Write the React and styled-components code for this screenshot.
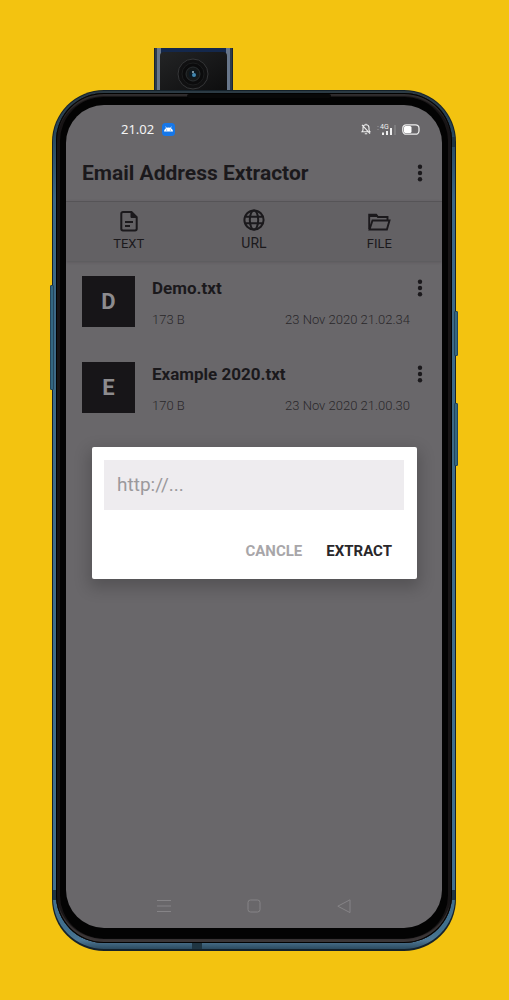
import React, { useState } from "react";
import styled, { createGlobalStyle } from "styled-components";

const GlobalStyle = createGlobalStyle`
  * {
    box-sizing: border-box;
  }
  body {
    margin: 0;
    background-color: #f3c310;
    font-family: Roboto, "Liberation Sans", sans-serif;
    color: #1b191c;
  }
  button,
  input {
    font-family: inherit;
  }
  svg {
    display: block;
  }
`;

const files = [
  { name: "Demo.txt", size: "173 B", date: "23 Nov 2020 21.02.34" },
  { name: "Example 2020.txt", size: "170 B", date: "23 Nov 2020 21.00.30" },
];

const CameraIcon = () => (
  <svg width="79" height="44" viewBox="0 0 79 44" aria-hidden="true">
    <defs>
      <linearGradient id="plate" x1="0" x2="1" y1="0" y2="1">
        <stop offset="0" stopColor="#232425" />
        <stop offset="1" stopColor="#0d0d0e" />
      </linearGradient>
    </defs>
    <path d="M0 1h79v43H0z" fill="#1b2530" />
    <path d="M1 1h6v43H1zM72 1h5v43h-5z" fill="#68768a" />
    <path d="M2 1v43M77 1v43" stroke="#2c3b4c" strokeWidth="2" />
    <path d="M7 1h65v5H7z" fill="#14284c" />
    <path d="M6 44V9q0-4 4-4h59q4 0 4 4v35z" fill="url(#plate)" />
    <circle cx="39" cy="27" r="15" fill="#101011" stroke="#353638" />
    <circle cx="39" cy="27" r="11" fill="#0b0b0c" stroke="#1c1d1e" />
    <circle cx="39" cy="27" r="7" fill="#151819" stroke="#2a2e30" />
    <circle cx="39" cy="27" r="4" fill="#0b1923" />
    <circle cx="40" cy="28" r="2" fill="#4187b0" />
    <circle cx="39" cy="25" r="1" fill="#a0b9c4" />
  </svg>
);

const MoreIcon = () => (
  <svg width="6" height="18" viewBox="0 0 6 18" fill="currentColor" aria-hidden="true">
    <circle cx="3" cy="2.7" r="2.2" />
    <circle cx="3" cy="9" r="2.2" />
    <circle cx="3" cy="15.3" r="2.2" />
  </svg>
);

const AndroidBadge = () => (
  <svg width="13" height="13" viewBox="0 0 13 13" aria-hidden="true">
    <rect width="13" height="13" rx="3.5" fill="#1677e8" />
    <path d="M2 8.500a4.500 4 0 0 1 9 0z" fill="#fff" />
    <path d="M3.600 3.600l1 1.600M9.400 3.600l-1 1.600" stroke="#fff" strokeWidth=".7" />
    <circle cx="4.700" cy="7" r=".5" fill="#1677e8" />
    <circle cx="8.300" cy="7" r=".5" fill="#1677e8" />
  </svg>
);

const MutedIcon = () => (
  <svg width="10" height="12" viewBox="0 0 10 12" fill="none" stroke="#eee" strokeWidth="1.100" aria-hidden="true">
    <path d="M1 8.800h8L8 7.200V4.800a3 3 0 0 0-6 0v2.400zM3.800 10.800h2.400M5 .8v1M1 1.800l8 8.800" />
  </svg>
);

const SignalIcon = () => (
  <svg width="19" height="13" viewBox="0 0 19 13" aria-hidden="true">
    <path d="M6 9.500v2.500M10 8v4M14 5v7" stroke="#eee" strokeWidth="2" />
    <path d="M18 2v10" stroke="#858386" strokeWidth="1.500" />
    <path d="M1 3v1M1 6v1" stroke="#9c9a9d" />
    <text x="3" y="6" fontSize="7" fill="#eee">
      4G
    </text>
  </svg>
);

const BatteryIcon = () => (
  <svg width="18" height="11" viewBox="0 0 18 11" aria-hidden="true">
    <rect x=".8" y=".8" width="16.200" height="9.400" rx="3.500" fill="none" stroke="#eee" strokeWidth="1.300" />
    <rect x="2" y="2" width="7.500" height="7" rx="1.500" fill="#fff" />
  </svg>
);

const DocIcon = () => (
  <svg width="18" height="22" viewBox="0 0 18 22" fill="none" stroke="currentColor" strokeWidth="2" aria-hidden="true">
    <path d="M11.500 2H3A1.700 1.700 0 0 0 1.300 3.700v15.100A1.700 1.700 0 0 0 3 20.500h12a1.700 1.700 0 0 0 1.700-1.700V7.200z" />
    <path d="M11 2v5.500h5.700z" fill="currentColor" strokeWidth="1" />
    <path d="M5 12h8M5 16h5" strokeWidth="1.800" />
  </svg>
);

const GlobeIcon = () => (
  <svg width="22" height="22" viewBox="0 0 22 22" fill="none" stroke="currentColor" strokeWidth="2" aria-hidden="true">
    <circle cx="11" cy="11" r="9.600" />
    <ellipse cx="11" cy="11" rx="4.200" ry="9.600" />
    <path d="M2.300 7.700h17.400M2.300 14.300h17.400" />
  </svg>
);

const FolderIcon = () => (
  <svg width="23" height="19" viewBox="0 0 23 19" fill="none" stroke="currentColor" strokeWidth="1.900" aria-hidden="true">
    <path d="M1.200 16V1.800h7l1.800 2.200h9.500v3.500" />
    <path d="M1 1h7.500l1.800 3H1z" fill="currentColor" stroke="none" />
    <path d="M1.500 16.500L4.500 7.500h17l-2.600 9z" />
  </svg>
);

const actions = [
  { label: "TEXT", icon: <DocIcon /> },
  { label: "URL", icon: <GlobeIcon />, large: true },
  { label: "FILE", icon: <FolderIcon /> },
];

export default function App() {
  const [url, setUrl] = useState("");

  return (
    <Page>
      <GlobalStyle />
      <Camera>
        <CameraIcon />
      </Camera>
      <Frame>
        <SideKey $side="left" $top={195} $height={105} />
        <SideKey $side="right" $top={221} $height={45} />
        <SideKey $side="right" $top={313} $height={63} />
        <Rim>
          <Bezel>
            <Screen>
              <StatusBar>
                <Clock>
                  21.02 <AndroidBadge />
                </Clock>
                <Indicators>
                  <MutedIcon />
                  <SignalIcon />
                  <BatteryIcon />
                </Indicators>
              </StatusBar>
              <Header>
                <Title>Email Address Extractor</Title>
                <IconButton aria-label="More options">
                  <MoreIcon />
                </IconButton>
              </Header>
              <Toolbar>
                {actions.map((action) => (
                  <Action key={action.label} $large={action.large}>
                    {action.icon}
                    <span>{action.label}</span>
                  </Action>
                ))}
              </Toolbar>
              <FileList>
                {files.map((file) => (
                  <FileRow key={file.name}>
                    <Avatar>{file.name[0]}</Avatar>
                    <FileInfo>
                      <FileName>{file.name}</FileName>
                      <FileMeta>
                        <span>{file.size}</span>
                        <span>{file.date}</span>
                      </FileMeta>
                    </FileInfo>
                    <IconButton aria-label={`Options for ${file.name}`}>
                      <MoreIcon />
                    </IconButton>
                  </FileRow>
                ))}
              </FileList>
              <NavBar>
                <NavButton aria-label="Recent apps">
                  <svg width="14" height="14" viewBox="0 0 14 14">
                    <path d="M0 1.500h14M0 7h14M0 12.500h14" />
                  </svg>
                </NavButton>
                <NavButton aria-label="Home">
                  <svg width="14" height="14" viewBox="0 0 14 14">
                    <rect x="1" y="1" width="12" height="12" rx="2.500" />
                  </svg>
                </NavButton>
                <NavButton aria-label="Back">
                  <svg width="14" height="14" viewBox="0 0 14 14">
                    <path d="M13 .8v12.800L.8 7.200z" />
                  </svg>
                </NavButton>
              </NavBar>
              <Overlay>
                <Dialog role="dialog" aria-label="Extract from URL">
                  <UrlInput
                    type="text"
                    aria-label="URL"
                    placeholder="http://..."
                    value={url}
                    onChange={(e) => setUrl(e.target.value)}
                  />
                  <DialogActions>
                    <DialogButton $muted onClick={() => setUrl("")}>
                      CANCLE
                    </DialogButton>
                    <DialogButton>EXTRACT</DialogButton>
                  </DialogActions>
                </Dialog>
              </Overlay>
            </Screen>
          </Bezel>
        </Rim>
        <Antenna $place="bottom" />
        <Antenna $place="left" />
        <Antenna $place="right" />
        <Antenna $place="rightTop" />
        <Earpiece />
      </Frame>
    </Page>
  );
}

const Page = styled.main`
  min-height: 100vh;
  padding: 47px 53px 49px 52px;
  display: flex;
  flex-direction: column;
`;

const Camera = styled.div`
  height: 43px;
  padding-left: 102px;
`;

const Frame = styled.div`
  position: relative;
  flex: 1;
  display: flex;
  padding: 1px 1px 2px;
  border-radius: 52px;
  background-color: #15222b;
`;

const Rim = styled.div`
  flex: 1;
  display: flex;
  padding: 2px 3px 6px;
  border-radius: 51px;
  background: linear-gradient(#2c3a43 0, #27465a 40px, #3b6785 110px, #41708e 98%, #4e7793 99%, #2c4b60 100%);
`;

const Bezel = styled.div`
  flex: 1;
  display: flex;
  padding: 12px 10px 15px;
  border-radius: 48px;
  background-color: #030303;
  box-shadow:
    inset 0 0 0 1px #020202,
    inset 0 -4px 1px #3b3637,
    inset 0 3px 1px #302d2e,
    inset 0 0 0 4px #171415;
`;

const Screen = styled.div`
  position: relative;
  flex: 1;
  display: flex;
  flex-direction: column;
  overflow: hidden;
  border-radius: 38px;
  background-color: #69676a;
`;

const SideKey = styled.span`
  position: absolute;
  z-index: 1;
  top: ${({ $top }) => $top}px;
  ${({ $side }) => $side}: -2px;
  width: 4px;
  height: ${({ $height }) => $height}px;
  border: 1px solid #24455a;
  border-radius: 1px;
  background-color: #336681;
`;

const antennaPlaces = {
  bottom: "bottom: 2px; left: 140px; width: 10px; height: 6px;",
  left: "bottom: 51px; left: 1px; width: 3px; height: 10px;",
  right: "bottom: 51px; right: 1px; width: 3px; height: 10px;",
  rightTop: "top: 47px; right: 1px; width: 3px; height: 10px;",
};

const Antenna = styled.span`
  position: absolute;
  background-color: #1f3542;
  ${({ $place }) => antennaPlaces[$place]}
`;

const Earpiece = styled.span`
  position: absolute;
  top: 4px;
  left: 135px;
  right: 125px;
  height: 4px;
  border-radius: 2px;
  background-color: #080808;
`;

const StatusBar = styled.div`
  height: 40px;
  padding: 8px 22px 0 55px;
  display: flex;
  justify-content: space-between;
  align-items: center;
`;

const Clock = styled.div`
  display: flex;
  align-items: center;
  gap: 8px;
  color: #f4f4f4;
  font-family: "Noto Sans", sans-serif;
  font-size: 13px;
`;

const Indicators = styled.div`
  display: flex;
  align-items: center;
  gap: 6px;
`;

const Header = styled.header`
  height: 56px;
  padding: 0 13px 0 16px;
  display: flex;
  justify-content: space-between;
  align-items: center;
`;

const Title = styled.h1`
  margin: 0;
  font-size: 21px;
  font-weight: 700;
`;

const IconButton = styled.button`
  width: 18px;
  height: 24px;
  padding: 0;
  border: none;
  background: none;
  color: inherit;
  display: flex;
  justify-content: center;
  align-items: center;
  cursor: pointer;
`;

const Toolbar = styled.nav`
  height: 60px;
  display: grid;
  grid-template-columns: repeat(3, 1fr);
  border-top: 1px solid #565457;
  background-color: #636164;
  box-shadow: 0 1px 3px #59575a;
`;

const Action = styled.button`
  padding: 0 0 ${({ $large }) => ($large ? 10 : 9)}px;
  border: none;
  background: none;
  color: inherit;
  display: flex;
  flex-direction: column;
  align-items: center;
  justify-content: flex-end;
  gap: 4px;
  font-size: ${({ $large }) => ($large ? 14 : 13)}px;
  line-height: 16px;
  cursor: pointer;
`;

const FileList = styled.ul`
  flex: 1;
  margin: 0;
  padding: 15px 13px 0 16px;
  list-style: none;
`;

const FileRow = styled.li`
  height: 86px;
  display: flex;
  align-items: flex-start;
`;

const Avatar = styled.div`
  width: 53px;
  height: 51px;
  margin-right: 17px;
  display: flex;
  justify-content: center;
  align-items: center;
  background-color: #171518;
  color: #8d8b8e;
  font-size: 22px;
  font-weight: 700;
`;

const FileInfo = styled.div`
  flex: 1;
  margin-right: 1px;
`;

const FileName = styled.div`
  font-size: 17px;
  font-weight: 700;
  line-height: 24px;
`;

const FileMeta = styled.div`
  padding-top: 12px;
  display: flex;
  justify-content: space-between;
  color: #29272a;
  font-size: 13px;
  font-weight: 300;
  line-height: 16px;
`;

const NavBar = styled.nav`
  height: 44px;
  padding: 0 53px;
  display: grid;
  grid-template-columns: repeat(3, 1fr);
`;

const NavButton = styled.button`
  padding: 0;
  border: none;
  background: none;
  display: flex;
  justify-content: center;
  align-items: center;
  cursor: pointer;

  svg {
    fill: none;
    stroke: #868487;
    stroke-width: 1;
  }
`;

const Overlay = styled.div`
  position: absolute;
  inset: 0;
  padding: 0 25px 8px 26px;
  display: flex;
  align-items: center;
`;

const Dialog = styled.section`
  flex: 1;
  padding: 13px 13px 16px 12px;
  border-radius: 2px;
  background-color: #fff;
  box-shadow: 0 6px 16px 3px rgba(0, 0, 0, 0.2);
`;

const UrlInput = styled.input`
  display: block;
  width: 100%;
  height: 50px;
  padding: 0 13px;
  border: none;
  border-radius: 0;
  background-color: #eeecef;
  color: #1b191c;
  font-size: 19px;
  outline: none;

  &::placeholder {
    color: #9b999c;
    opacity: 1;
  }
`;

const DialogActions = styled.div`
  padding: 29px 12px 0;
  display: flex;
  justify-content: flex-end;
  gap: 24px;
`;

const DialogButton = styled.button`
  padding: 0;
  border: none;
  background: none;
  color: ${({ $muted }) => ($muted ? "#a8a6a9" : "#29272a")};
  font-size: 15px;
  font-weight: 700;
  line-height: 24px;
  cursor: pointer;
`;
